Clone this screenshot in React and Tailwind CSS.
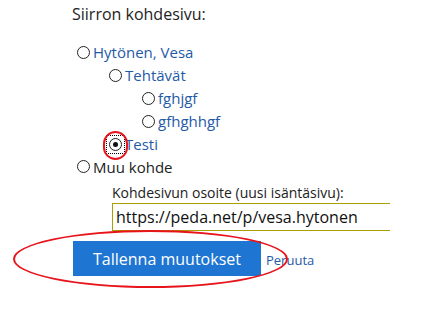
import React from "react";

function Radio({ checked }) {
  return (
    <span className="relative inline-flex items-center justify-center w-[13px] h-[13px] mr-[3px] shrink-0">
      {checked && (
        <span className="absolute -inset-[3px] border border-dotted border-black" />
      )}
      <span className="w-[13px] h-[13px] rounded-full border-[1.5px] border-[#222] bg-white flex items-center justify-center">
        {checked && <span className="w-[5px] h-[5px] rounded-full bg-[#111]" />}
      </span>
    </span>
  );
}

function Option({ indent, label, checked, link = true }) {
  return (
    <div className={`flex items-center h-[22.9px] leading-[20px] ${indent}`}>
      <Radio checked={checked} />
      <span className={link ? "text-[#1f5aa6]" : "text-[#222]"}>{label}</span>
    </div>
  );
}

export default function App() {
  return (
    <div className="relative w-[448px] h-[320px] bg-white overflow-hidden font-['Open_Sans',sans-serif] text-[16px] text-[#222]">
      <div className="pl-[72px] pt-[3px]">
        <div className="text-[16px] leading-[22px]">Siirron kohdesivu:</div>
      </div>

      <div className="pt-[16px] pl-[77px] text-[15px]">
        <Option indent="" label="Hytönen, Vesa" />
        <Option indent="pl-[32px]" label="Tehtävät" />
        <Option indent="pl-[65px]" label="fghjgf" />
        <Option indent="pl-[65px]" label="gfhghhgf" />
        <Option indent="pl-[32px]" label="Testi" checked />
        <Option indent="" label="Muu kohde" link={false} />
      </div>

      <div className="pl-[112px] pt-[5px]">
        <div className="text-[14px] leading-[20px]">Kohdesivun osoite (uusi isäntäsivu):</div>
        <div className="w-[278px] h-[28px] border-l border-t border-b border-[#a8a000] flex items-center pl-[3px] text-[16px] text-[#111]">
          https://peda.net/p/vesa.hytonen
        </div>
      </div>

      <div className="flex items-center pl-[73px] mt-[10px]">
        <button className="w-[188px] h-[35px] bg-[#1e76d2] text-white text-[16px]">
          Tallenna muutokset
        </button>
        <a className="ml-[5px] text-[13px] text-[#1f5aa6] mt-[3px]">Peruuta</a>
      </div>

      <div className="absolute left-[103px] top-[131px] w-[25px] h-[29px] rounded-full border-2 border-[#e8141c]" />
      <div className="absolute left-[13px] top-[230px] w-[275px] h-[58px] rounded-[50%] border-2 border-[#e8141c]" />
    </div>
  );
}
